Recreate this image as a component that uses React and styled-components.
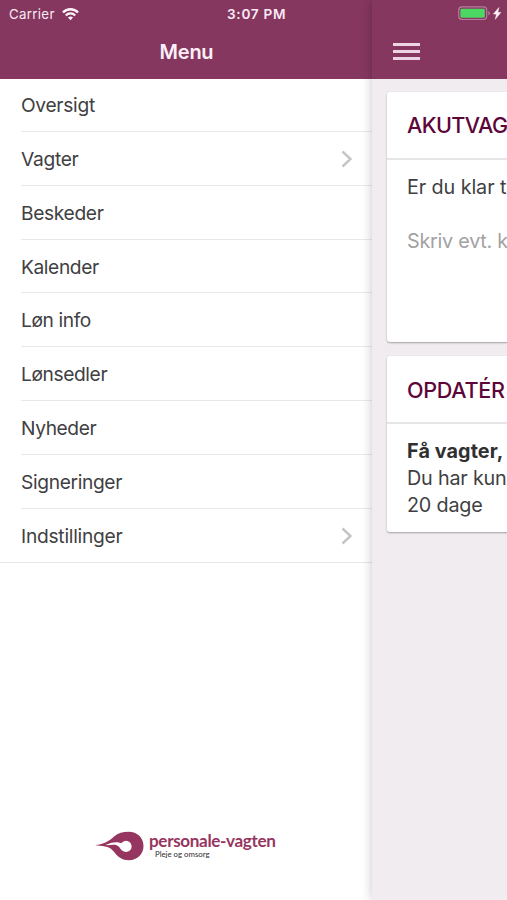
import styled, { createGlobalStyle } from "styled-components";

const GlobalStyle = createGlobalStyle`
    * {
        box-sizing: border-box;
    }

    body {
        margin: 0;
        overflow: hidden;
        font-family: Inter, "Liberation Sans", sans-serif;
        color: #404042;
    }
`;

const Screen = styled.div`
    width: 507px;
    height: 900px;
    display: flex;
    position: relative;
    overflow: hidden;
    background-color: #fff;
`;

const StatusBar = styled.div`
    position: absolute;
    z-index: 3;
    top: 0;
    left: 0;
    width: 100%;
    height: 27px;
    padding: 0 5px 0 9px;
    display: grid;
    grid-template-columns: 218px 1fr auto;
    align-items: center;
    color: #fbeaf4;
    font-size: 13px;
    line-height: 28px;
`;

const Carrier = styled.div`
    display: flex;
    align-items: center;
    gap: 7px;
    font-size: 13.3px;
    letter-spacing: 0.3px;
`;

const Clock = styled.span`
    font-size: 13.6px;
    font-weight: 600;
    letter-spacing: 0.7px;
`;

const Battery = styled.svg`
    display: block;
    margin-top: -1px;
`;

const MenuPanel = styled.aside`
    width: 372px;
    height: 100%;
    display: flex;
    flex-direction: column;
    flex-shrink: 0;
`;

const MenuHeader = styled.header`
    height: 79px;
    padding: 27px 0 0 1px;
    flex-shrink: 0;
    background-color: #85375f;
    color: #fdeff7;
    font-size: 20px;
    font-weight: 600;
    line-height: 50px;
    letter-spacing: -0.25px;
    text-align: center;
`;

const MenuList = styled.ul`
    margin: 0;
    padding: 0;
    list-style: none;
    border-bottom: 1px solid #e6e6e7;
`;

const MenuItem = styled.li`
    height: 53.8px;
    margin-left: 21px;
    padding: 1.2px 19px 0 0;
    display: flex;
    align-items: center;
    justify-content: space-between;
    border-bottom: 1px solid #e8e8e9;
    font-size: 19.2px;
    letter-spacing: ${(props) => props.$tracking}px;

    &:first-child {
        height: 53px;
        padding-top: 0;
    }

    &:last-child {
        border-bottom: 0;
    }
`;

const Logo = styled.div`
    margin: auto 0 39px 95px;
    display: flex;
    align-items: center;
    gap: 5px;
`;

const LogoText = styled.div`
    margin-top: -3px;
    display: flex;
    flex-direction: column;
    font-family: Lato, sans-serif;
`;

const LogoName = styled.span`
    color: #963660;
    font-size: 17.1px;
    font-weight: 700;
    line-height: 19px;
    letter-spacing: -0.35px;
    white-space: nowrap;
`;

const LogoTagline = styled.span`
    padding-left: 6px;
    color: #302c2e;
    font-size: 7.8px;
    line-height: 8px;
`;

const Page = styled.main`
    width: 135px;
    height: 100%;
    display: flex;
    flex-direction: column;
    flex-shrink: 0;
    background-color: #f0ecf0;
    box-shadow: 0 0 10px rgba(0, 0, 0, 0.22);
`;

const Toolbar = styled.header`
    height: 79px;
    padding: 43px 0 0 21px;
    flex-shrink: 0;
    background-color: #85375f;
`;

const MenuButton = styled.button`
    width: 27px;
    height: 17px;
    padding: 0;
    display: flex;
    flex-direction: column;
    justify-content: space-between;
    border: 0;
    background: none;
`;

const Bar = styled.span`
    width: 100%;
    height: 3px;
    background-color: #eed3e2;
`;

const Cards = styled.div`
    width: 200px;
    padding: 13px 0 0 15px;
    display: flex;
    flex-direction: column;
    gap: 14px;
`;

const Card = styled.section`
    height: ${(props) => props.$height}px;
    border-radius: 3px;
    background-color: #fff;
    box-shadow: 0 1px 2px rgba(0, 0, 0, 0.32);
    overflow: hidden;
`;

const CardTitle = styled.h2`
    height: 68px;
    margin: 0;
    padding: 0 20px;
    border-bottom: 2px solid #e5e4e6;
    color: #5d0639;
    font-size: 21.6px;
    font-weight: 500;
    line-height: ${(props) => props.$line ?? 66}px;
    letter-spacing: ${(props) => props.$tracking}px;
    white-space: nowrap;
`;

const CardBody = styled.div`
    padding: 14px 20px;
    font-size: 19.8px;
    line-height: 27px;
    letter-spacing: -0.25px;
    white-space: nowrap;
`;

const Line = styled.div`
    font-weight: ${(props) => props.$bold ? 700 : 400};
    color: ${(props) => props.$bold ? "#302f31" : "inherit"};
    letter-spacing: ${(props) => props.$tracking ?? -0.2}px;
`;

const Placeholder = styled.div`
    margin-top: 27px;
    color: #a2a1a3;
`;

const menuItems = [
    { title: "Oversigt", tracking: -0.3 },
    { title: "Vagter", tracking: -0.3, nested: true },
    { title: "Beskeder", tracking: -0.35 },
    { title: "Kalender", tracking: -0.4 },
    { title: "Løn info", tracking: -0.4 },
    { title: "Lønsedler", tracking: -0.4 },
    { title: "Nyheder", tracking: -0.4 },
    { title: "Signeringer", tracking: -0.35 },
    { title: "Indstillinger", tracking: -0.25, nested: true },
];

const Chevron = () => (
    <svg width="13" height="18" viewBox="0 0 13 18" fill="none">
        <path d="M2.5 1.5L10.5 9L2.5 16.5" stroke="#c5c5c7" strokeWidth="2.4" />
    </svg>
);

const WifiIcon = () => (
    <svg width="17" height="13" viewBox="0 0 17 13" fill="none" stroke="#fff3fa">
        <path d="M1 4.6C5 .1 12 .1 16 4.6" strokeWidth="2.3" />
        <path d="M3.8 7.4C6.4 4.6 10.6 4.6 13.2 7.4" strokeWidth="2.2" />
        <path d="M6 9.6C7.4 8.2 9.6 8.2 11 9.6L8.5 12.3Z" fill="#fff3fa" stroke="none" />
    </svg>
);

const BatteryIcon = () => (
    <Battery width="44" height="15" viewBox="0 0 44 15">
        <rect x=".7" y=".9" width="28" height="12.6" rx="3.4" fill="none" stroke="#b77d9d" strokeWidth="1.2" />
        <rect x="2.4" y="2.7" width="24.4" height="9" rx="1.4" fill="#4bd964" />
        <path d="M30.3 5V9.4Q31.8 8.8 31.8 7.2T30.3 5Z" fill="#b77d9d" />
        <path d="M40.9 1.5L35.4 8.1H38.5L37.3 13.2L42.8 6.4H39.8Z" fill="#fff3fa" stroke="#fff3fa" strokeWidth=".5" />
    </Battery>
);

const LogoMark = () => (
    <svg width="49" height="30" viewBox="0 0 49 30">
        <path
            fill="#963660"
            d="M0 14C9 13 14 10 19 5.4C23 2 28 .8 33.5 .8C42.5 .8 48.5 7 48.5 15C48.5 23 42.5 29.2 34 29.2C27 29.2 23 26 20 22C17 18 14.5 16 10 15.4C7 15 3 14.6 0 14Z"
        />
        {/* the eye of the drop and the stream running into it */}
        <circle cx="31" cy="15.4" r="5.6" fill="#fff" />
        <path
            fill="#fff"
            d="M10.5 14.1C14.5 12.2 18.5 10.8 22.5 11.2C26 11.5 28.5 12.8 30 15L27.2 19.4C25 18 24.2 14.3 19.8 13.8C16.5 13.4 14 14.4 10.5 14.1Z"
        />
    </svg>
);

const App = () => {
    return (
        <>
            <GlobalStyle />
            <Screen>
                <StatusBar>
                    <Carrier>
                        Carrier
                        <WifiIcon />
                    </Carrier>
                    <Clock>3:07 PM</Clock>
                    <BatteryIcon />
                </StatusBar>
                <MenuPanel>
                    <MenuHeader>Menu</MenuHeader>
                    <MenuList>
                        {menuItems.map((el) => (
                            <MenuItem key={el.title} $tracking={el.tracking}>
                                <span>{el.title}</span>
                                {el.nested && <Chevron />}
                            </MenuItem>
                        ))}
                    </MenuList>
                    <Logo>
                        <LogoMark />
                        <LogoText>
                            <LogoName>personale-vagten</LogoName>
                            <LogoTagline>Pleje og omsorg</LogoTagline>
                        </LogoText>
                    </Logo>
                </MenuPanel>
                <Page>
                    <Toolbar>
                        <MenuButton aria-label="Menu">
                            <Bar />
                            <Bar />
                            <Bar />
                        </MenuButton>
                    </Toolbar>
                    <Cards>
                        <Card $height={250}>
                            <CardTitle $tracking={-0.6}>AKUTVAG</CardTitle>
                            <CardBody>
                                <Line $tracking={-0.1}>Er du klar t</Line>
                                <Placeholder>Skriv evt. k</Placeholder>
                            </CardBody>
                        </Card>
                        <Card $height={176}>
                            <CardTitle $tracking={-0.3} $line={68}>OPDATÉR</CardTitle>
                            <CardBody>
                                <Line $bold $tracking={0.1}>Få vagter,</Line>
                                <Line>Du har kun</Line>
                                <Line>20 dage</Line>
                            </CardBody>
                        </Card>
                    </Cards>
                </Page>
            </Screen>
        </>
    );
};

export default App;
